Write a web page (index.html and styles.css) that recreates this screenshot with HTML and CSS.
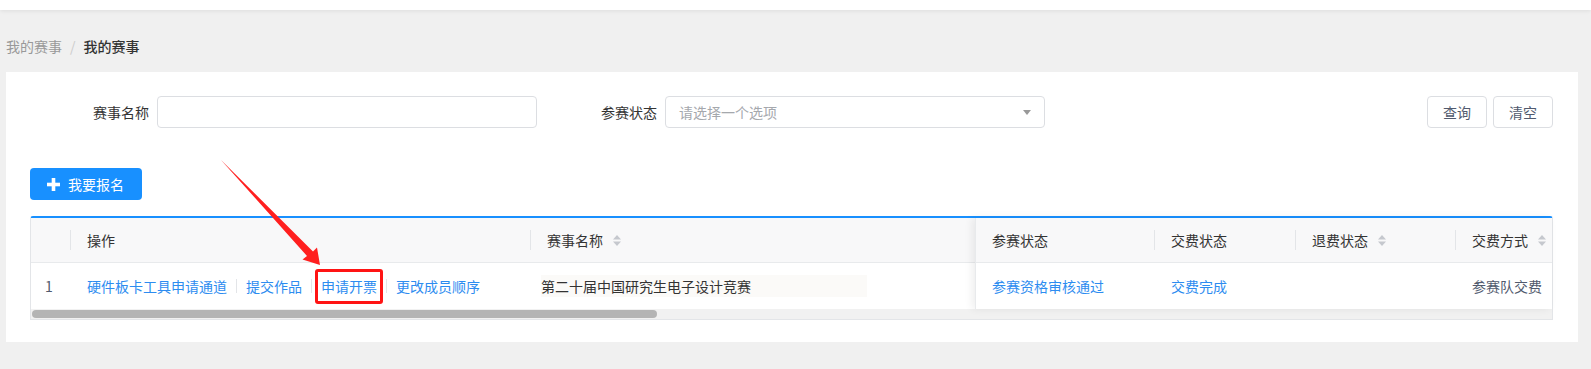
FILE: index.html
```html
<!DOCTYPE html>
<html lang="zh-CN">
<head>
<meta charset="utf-8">
<title>我的赛事</title>
<link rel="stylesheet" href="styles.css">
</head>
<body>
<header class="topbar"></header>
<nav class="breadcrumb">
  <span class="crumb">我的赛事</span><span class="crumb-sep">/</span><span class="crumb current">我的赛事</span>
</nav>
<main class="panel">
  <form class="search">
    <div class="field">
      <label class="field-label">赛事名称</label>
      <input class="input" type="text">
    </div>
    <div class="field">
      <label class="field-label">参赛状态</label>
      <div class="select"><span class="placeholder">请选择一个选项</span><i class="caret"></i></div>
    </div>
    <div class="actions">
      <button type="button" class="btn">查询</button>
      <button type="button" class="btn">清空</button>
    </div>
  </form>
  <div class="toolbar">
    <button type="button" class="btn-primary">
      <svg class="plus" width="13" height="13" viewBox="0 0 13 13"><rect x="4.7" y="0" width="3.6" height="13" fill="#fff"/><rect x="0" y="4.7" width="13" height="3.6" fill="#fff"/></svg>
      <span>我要报名</span>
    </button>
  </div>
  <div class="table">
    <div class="table-main">
      <div class="scroll-part">
        <div class="thead">
          <div class="cell col-idx"></div>
          <div class="cell col-op th"><i class="th-sep"></i><span class="th-text">操作</span></div>
          <div class="cell col-name th"><i class="th-sep"></i><span class="th-text">赛事名称</span><svg class="sort" width="8" height="11" viewBox="0 0 8 11"><polygon points="4,0 8,4.5 0,4.5" fill="#c5c8ce"/><polygon points="0,6.5 8,6.5 4,11" fill="#c5c8ce"/></svg></div>
        </div>
        <div class="trow">
          <div class="cell col-idx idx">1</div>
          <div class="cell col-op ops">
            <a class="link">硬件板卡工具申请通道</a><i class="link-sep"></i><a class="link">提交作品</a><i class="link-sep"></i><a class="link marked">申请开票</a><i class="link-sep"></i><a class="link">更改成员顺序</a>
          </div>
          <div class="cell col-name name"><span class="name-text">第二十届中国研究生电子设计竞赛</span></div>
        </div>
      </div>
      <div class="fixed-part">
        <div class="thead">
          <div class="cell col-status th first"><span class="th-text">参赛状态</span></div>
          <div class="cell col-pay th"><i class="th-sep"></i><span class="th-text">交费状态</span></div>
          <div class="cell col-refund th"><i class="th-sep"></i><span class="th-text">退费状态</span><svg class="sort" width="8" height="11" viewBox="0 0 8 11"><polygon points="4,0 8,4.5 0,4.5" fill="#c5c8ce"/><polygon points="0,6.5 8,6.5 4,11" fill="#c5c8ce"/></svg></div>
          <div class="cell col-method th"><i class="th-sep"></i><span class="th-text">交费方式</span><svg class="sort" width="8" height="11" viewBox="0 0 8 11"><polygon points="4,0 8,4.5 0,4.5" fill="#c5c8ce"/><polygon points="0,6.5 8,6.5 4,11" fill="#c5c8ce"/></svg></div>
        </div>
        <div class="trow">
          <div class="cell col-status td first"><a class="link">参赛资格审核通过</a></div>
          <div class="cell col-pay td"><a class="link">交费完成</a></div>
          <div class="cell col-refund td"></div>
          <div class="cell col-method td plain">参赛队交费</div>
        </div>
      </div>
    </div>
    <div class="hscroll"><div class="thumb"></div></div>
  </div>
</main>
<svg class="arrow" width="1591" height="369" viewBox="0 0 1591 369">
  <polygon points="221,160 313,251.5 317,247.5 320,265 302.5,259.5 307,256" fill="#ff1f1f"/>
</svg>
</body>
</html>
```

FILE: styles.css
```css
* {
  box-sizing: border-box;
  margin: 0;
  padding: 0;
}

body {
  position: relative;
  width: 1591px;
  min-height: 369px;
  background: #f0f0f0;
  font-family: "Noto Sans CJK SC", "Noto Sans", sans-serif;
  font-size: 14px;
  line-height: 20px;
  color: #515a6e;
}

.topbar {
  height: 10px;
  background: #fff;
  box-shadow: 0 1px 4px rgba(0, 0, 0, 0.08);
}

.breadcrumb {
  padding: 26px 6px 16px;
  line-height: 20px;
  color: #999;
}

.crumb-sep {
  padding: 0 8px;
  color: #ccc;
}

.crumb.current {
  color: #333;
  font-weight: 500;
}

.panel {
  display: block;
  margin: 0 13px 0 6px;
  padding: 24px 25px 22px 24px;
  background: #fff;
}

.search {
  display: flex;
  align-items: center;
  height: 32px;
}

.field {
  display: flex;
  align-items: center;
}

.field-label {
  width: 127px;
  padding-right: 8px;
  text-align: right;
  color: #333;
}

.field + .field .field-label {
  width: 128px;
}

.input,
.select {
  width: 380px;
  height: 32px;
  border: 1px solid #dcdee2;
  border-radius: 4px;
  background: #fff;
  outline: none;
}

.select {
  display: flex;
  align-items: center;
  justify-content: space-between;
  padding: 0 12px 0 13px;
}

.placeholder {
  color: #a5a8ad;
}

.caret {
  width: 0;
  height: 0;
  border-left: 4px solid transparent;
  border-right: 4px solid transparent;
  border-top: 5px solid #999;
  margin-right: 1px;
}

.actions {
  display: flex;
  gap: 6px;
  margin-left: auto;
}

.btn {
  width: 60px;
  height: 32px;
  border: 1px solid #dcdee2;
  border-radius: 4px;
  background: #fff;
  font: inherit;
  color: #515a6e;
}

.toolbar {
  margin-top: 40px;
  display: flex;
}

.btn-primary {
  display: flex;
  align-items: center;
  width: 112px;
  height: 32px;
  padding-left: 17px;
  border: none;
  border-radius: 4px;
  background: #1890ff;
  color: #fff;
  font: inherit;
}

.plus {
  margin-right: 8px;
}

.table {
  margin-top: 16px;
  border: 1px solid #e3e5e8;
  border-top: 2px solid #1890ff;
  border-radius: 3px 3px 0 0;
}

.table-main {
  display: flex;
}

.scroll-part {
  width: 944px;
  overflow: hidden;
}

.fixed-part {
  width: 577px;
  border-left: 1px solid #e8eaec;
  box-shadow: -3px 0 8px rgba(0, 0, 0, 0.07);
  position: relative;
  background: #fff;
}

.thead {
  display: flex;
  height: 45px;
  background: #f8f8f9;
  border-bottom: 1px solid #e8eaec;
}

.trow {
  display: flex;
  height: 46px;
  background: #fff;
}

.cell {
  display: flex;
  align-items: center;
  flex: none;
}

.col-idx { width: 39px; justify-content: center; }
.col-op { width: 460px; }
.col-name { width: 445px; }
.col-status { width: 178px; }
.col-pay { width: 141px; }
.col-refund { width: 160px; }
.col-method { width: 97px; }

.th {
  color: #333;
}

.th-sep {
  width: 1px;
  height: 20px;
  background: #e3e5e8;
  margin-right: 16px;
}

.th.first,
.td.first {
  padding-left: 16px;
}

.sort {
  margin-left: 10px;
}

.idx {
  color: #515a6e;
  padding-right: 3px;
}

.ops {
  padding-left: 17px;
}

.link {
  color: #2d8cf0;
  text-decoration: none;
}

.link-sep {
  display: inline-block;
  width: 1px;
  height: 14px;
  margin: 0 9px;
  background: #e3e5e8;
}

.marked {
  position: relative;
}

.marked::after {
  content: "";
  position: absolute;
  left: -6px;
  right: -6px;
  top: -7px;
  bottom: -8px;
  border: 3px solid #ff1414;
  border-radius: 3px;
}

.name {
  padding-left: 11px;
}

.name-text {
  display: inline-block;
  width: 326px;
  line-height: 22px;
  background: #fbfaf8;
  color: #333;
}

.td {
  padding-left: 17px;
}

.td.plain {
  color: #515a6e;
}

.hscroll {
  height: 10px;
  padding: 1px 0 0 1px;
  background: #f1f1f1;
}

.thumb {
  width: 625px;
  height: 8px;
  border-radius: 4px;
  background: #b4b4b4;
}

.arrow {
  position: absolute;
  left: 0;
  top: 0;
  pointer-events: none;
}
```
